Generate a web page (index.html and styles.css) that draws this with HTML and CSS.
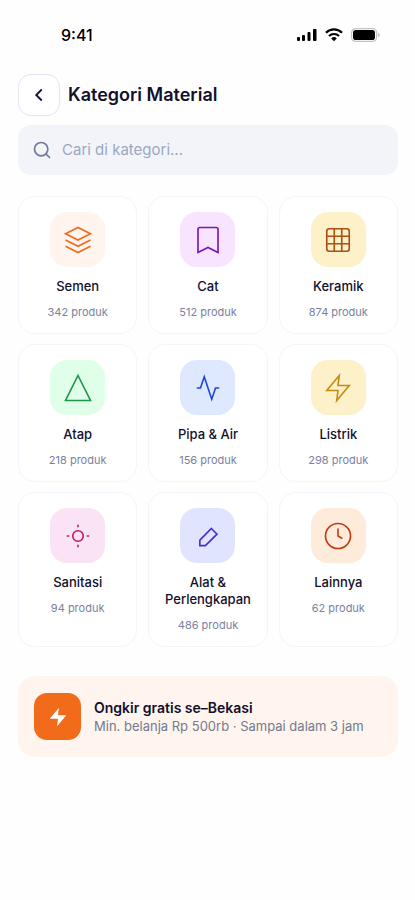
FILE: index.html
```html
<!DOCTYPE html>
<html lang="id">
<head>
<meta charset="utf-8">
<meta name="viewport" content="width=device-width, initial-scale=1">
<title>Kategori Material</title>
<link rel="stylesheet" href="styles.css">
</head>
<body>
<div class="status">
  <span class="time">9:41</span>
  <div class="indicators">
    <svg width="20" height="14" viewBox="0 0 20 14"><g fill="#000"><rect x="0" y="9" width="3" height="4" rx="1"/><rect x="5" y="7" width="3" height="6" rx="1"/><rect x="10.500" y="4" width="3" height="9" rx="1"/><rect x="16" y="1" width="3.500" height="12" rx="1"/></g></svg>
    <svg width="18" height="14" viewBox="0 0 18 14"><g fill="none" stroke="#000" stroke-width="2.200"><path d="M1 4.700a11.500 11.500 0 0 1 16 0"/><path d="M4 8a7.200 7.200 0 0 1 10 0"/></g><path fill="#000" d="M9 13.200 6.200 10.400a4 4 0 0 1 5.600 0z"/></svg>
    <svg width="29" height="14" viewBox="0 0 29 14"><rect x=".6" y=".6" width="25" height="12.800" rx="4" fill="none" stroke="#c4c2c6" stroke-width="1.200"/><rect x="2" y="2" width="22" height="10" rx="2.800"/><path fill="#c4c2c6" d="M27 4.800c1.200.4 1.800 1.200 1.800 2.200S28.200 8.800 27 9.200z"/></svg>
  </div>
</div>
<main class="page">
  <header class="header">
    <button class="back" type="button" aria-label="Kembali">
      <svg width="22" height="22" viewBox="0 0 24 24"><path d="m15 18-6-6 6-6"/></svg>
    </button>
    <h1 class="title">Kategori Material</h1>
  </header>
  <label class="search">
    <svg width="20" height="20" viewBox="0 0 24 24"><circle cx="11" cy="11" r="8"/><path d="m21 21-4.300-4.300"/></svg>
    <input class="search-input" type="search" placeholder="Cari di kategori..." aria-label="Cari di kategori">
  </label>
  <nav class="grid" aria-label="Kategori">
    <a class="card" href="#">
      <span class="tile semen"><svg class="icon" viewBox="0 0 24 24"><path d="M12 2 2 7l10 5 10-5zM2 17l10 5 10-5M2 12l10 5 10-5"/></svg></span>
      <span class="name">Semen</span><span class="count">342 produk</span>
    </a>
    <a class="card" href="#">
      <span class="tile cat"><svg class="icon" viewBox="0 0 24 24"><path d="m20 22-8-4-8 4V3.500A1.500 1.500 0 0 1 5.500 2h13A1.500 1.500 0 0 1 20 3.500z"/></svg></span>
      <span class="name">Cat</span><span class="count">512 produk</span>
    </a>
    <a class="card" href="#">
      <span class="tile keramik"><svg class="icon" viewBox="0 0 24 24"><rect x="3" y="3" width="18" height="18" rx="2"/><path d="M3 9h18M3 15h18M9 3v18M15 3v18"/></svg></span>
      <span class="name">Keramik</span><span class="count">874 produk</span>
    </a>
    <a class="card" href="#">
      <span class="tile atap"><svg class="icon" viewBox="0 0 24 24"><path d="m12 2 10 20H2z"/></svg></span>
      <span class="name">Atap</span><span class="count">218 produk</span>
    </a>
    <a class="card" href="#">
      <span class="tile pipa"><svg class="icon" viewBox="0 0 24 24"><path d="M21 12h-3l-3 9L9 3l-3 9H3"/></svg></span>
      <span class="name">Pipa &amp; Air</span><span class="count">156 produk</span>
    </a>
    <a class="card" href="#">
      <span class="tile listrik"><svg class="icon" viewBox="0 0 24 24"><path d="M13 2 3 14h9l-1 8 10-12h-9z"/></svg></span>
      <span class="name">Listrik</span><span class="count">298 produk</span>
    </a>
    <a class="card" href="#">
      <span class="tile sanitasi"><svg class="icon" viewBox="0 0 24 24"><circle cx="12" cy="12" r="4.200"/><path d="M12 3v2M12 19v2M3 12h2M19 12h2"/></svg></span>
      <span class="name">Sanitasi</span><span class="count">94 produk</span>
    </a>
    <a class="card" href="#">
      <span class="tile alat"><svg class="icon" viewBox="0 0 24 24"><path d="m14.700 6 4.500 4.500-9.300 9.200H5.500v-4.400z"/></svg></span>
      <span class="name">Alat &amp; Perlengkapan</span><span class="count">486 produk</span>
    </a>
    <a class="card" href="#">
      <span class="tile lainnya"><svg class="icon" viewBox="0 0 24 24"><circle cx="12" cy="12" r="10"/><path d="M12 6v6l3.500 2"/></svg></span>
      <span class="name">Lainnya</span><span class="count">62 produk</span>
    </a>
  </nav>
  <section class="promo">
    <span class="promo-icon"><svg width="22" height="22" viewBox="0 0 24 24"><path d="M13 2 3 14h9l-1 8 10-12h-9z"/></svg></span>
    <div class="promo-text">
      <h2 class="promo-title">Ongkir gratis se–Bekasi</h2>
      <p class="promo-sub">Min. belanja Rp 500rb · Sampai dalam 3 jam</p>
    </div>
  </section>
</main>
</body>
</html>
```
FILE: styles.css
```css
* { box-sizing: border-box; }

body {
  margin: 0;
  min-height: 100vh;
  background: #fefefe;
  color: #11102d;
  font-family: Inter, "Liberation Sans", sans-serif;
}

svg { display: block; flex: none; }

.status {
  display: flex;
  align-items: center;
  justify-content: space-between;
  padding: 24px 35px 0 61px;
}

.time {
  color: #000;
  font-size: 16px;
  font-weight: 500;
  line-height: 22px;
}

.indicators { display: flex; align-items: center; gap: 8px; }

.page { padding: 28px 17px 24px 18px; }

.header { display: flex; align-items: center; gap: 8px; }

.back {
  display: grid;
  place-items: center;
  width: 42px;
  height: 42px;
  padding: 0;
  border: 1px solid #e6e3f7;
  border-radius: 13px;
  background: #fff;
}

.back svg { fill: none; stroke: #11102d; stroke-width: 2; }

.title {
  margin: 0;
  font-size: 18px;
  font-weight: 600;
  line-height: 24px;
}

.search {
  display: flex;
  align-items: center;
  gap: 10px;
  height: 50px;
  margin-top: 9px;
  padding: 0 14px;
  border-radius: 13px;
  background: #f2f4fa;
}

.search svg { fill: none; stroke: #717b98; stroke-width: 2; stroke-linecap: round; }

.search-input {
  flex: 1;
  min-width: 0;
  padding: 0;
  border: 0;
  outline: 0;
  background: none;
  color: #11102d;
  font-family: inherit;
  font-size: 15px;
  line-height: 20px;
}

.search-input::placeholder { color: #9ba7c0; opacity: 1; }

.grid {
  display: grid;
  grid-template-columns: repeat(3, minmax(0, 1fr));
  gap: 10px 11px;
  margin-top: 21px;
}

.card {
  display: flex;
  flex-direction: column;
  align-items: center;
  padding: 15px 12px 13px;
  border: 1px solid #f4f4fc;
  border-radius: 17px;
  background: #fff;
  color: inherit;
  text-align: center;
  text-decoration: none;
}

.tile {
  display: grid;
  place-items: center;
  width: 55px;
  height: 55px;
  border-radius: 17px;
}

.icon {
  width: 30px;
  height: 30px;
  fill: none;
  stroke: currentColor;
  stroke-width: 1.3;
}

.name {
  margin-top: 11px;
  font-size: 13px;
  font-weight: 500;
  line-height: 17px;
}

.count {
  margin-top: 9px;
  color: #7a829f;
  font-size: 11px;
  line-height: 16px;
}

.semen { background: #fff5ee; color: #f06a1a; }
.cat { background: #f8e4ff; color: #7416bd; }
.keramik { background: #fdf1ca; color: #ad4f12; }
.atap { background: #dfffe8; color: #20944a; }
.pipa { background: #dee9ff; color: #2345d3; }
.listrik { background: #fdf1ca; color: #c88a13; }
.sanitasi { background: #fae3f5; color: #c01a6b; }
.alat { background: #e1e4ff; color: #4a2bd0; }
.lainnya { background: #ffebd9; color: #c33a16; }

.promo {
  display: flex;
  align-items: center;
  gap: 13px;
  margin-top: 29px;
  padding: 17px 16px;
  border-radius: 17px;
  background: #fff5ee;
}

.promo-icon {
  display: grid;
  flex: none;
  place-items: center;
  width: 47px;
  height: 47px;
  border-radius: 13px;
  background: #f16b1b;
}

.promo-icon svg { fill: #fff; }

.promo-title {
  margin: 0;
  font-size: 14px;
  font-weight: 600;
  line-height: 18px;
}

.promo-sub {
  margin: 0;
  color: #727a90;
  font-size: 13px;
  line-height: 18px;
}
```
